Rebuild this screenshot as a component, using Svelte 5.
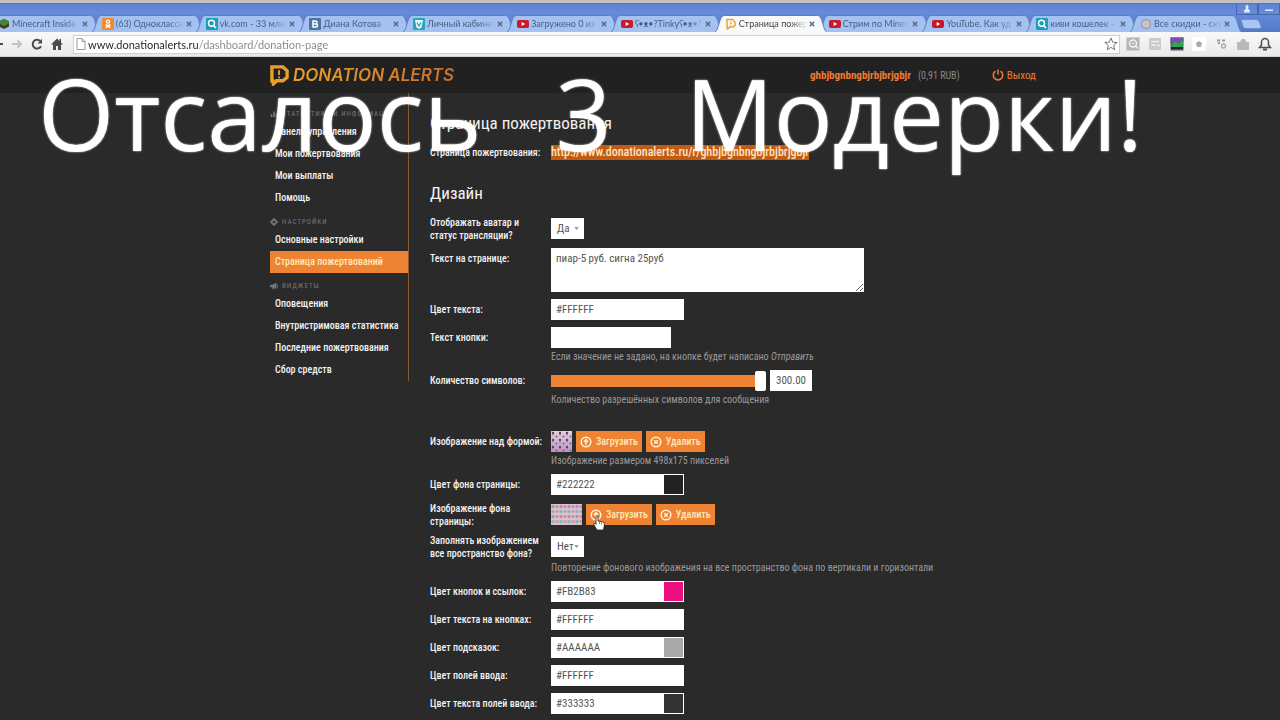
<script>
	const TABS = [
		{ icon: 'cube', title: 'Minecraft Inside' },
		{ icon: 'ok', title: '(63) Одноклассн' },
		{ icon: 'search', title: 'vk.com - 33 млн' },
		{ icon: 'vk', title: 'Диана Котова' },
		{ icon: 'shop', title: 'Личный кабинет' },
		{ icon: 'youtube', title: 'Загружено 0 из' },
		{ icon: 'youtube', title: 'ʕ•ᴥ•?Tinkyʕ•ᴥ•?' },
		{ icon: 'donation', title: 'Страница пожер', active: true },
		{ icon: 'youtube', title: 'Стрим по Minec' },
		{ icon: 'youtube', title: 'YouTube. Как уд' },
		{ icon: 'search', title: 'киви кошелек -' },
		{ icon: 'ring', title: 'Все скидки - ску' }
	];

	const MENU = [
		{
			icon: 'chart',
			title: 'Статистика и информация',
			items: ['Панель управления', 'Мои пожертвования', 'Мои выплаты', 'Помощь']
		},
		{
			icon: 'gear',
			title: 'Настройки',
			items: ['Основные настройки', 'Страница пожертвований']
		},
		{
			icon: 'horn',
			title: 'Виджеты',
			items: ['Оповещения', 'Внутристримовая статистика', 'Последние пожертвования', 'Сбор средств']
		}
	];

	const ACTIVE_ITEM = 'Страница пожертвований';

	let pageUrl = $state('www.donationalerts.ru/dashboard/donation-page');
	let showAvatar = $state('Да');
	let fillBackground = $state('Нет');
	let pageText = $state('пиар-5 руб. сигна 25руб');
	let buttonText = $state('');
	let symbols = $state(300);
	let textColor = $state('#FFFFFF');
	let backColor = $state('#222222');
	let colors = $state([
		{ id: 'links', label: 'Цвет кнопок и ссылок:', value: '#FB2B83', swatch: '#ec0f80' },
		{ id: 'button-text', label: 'Цвет текста на кнопках:', value: '#FFFFFF', swatch: '#ffffff' },
		{ id: 'hints', label: 'Цвет подсказок:', value: '#AAAAAA', swatch: '#aaa8ab' },
		{ id: 'inputs', label: 'Цвет полей ввода:', value: '#FFFFFF', swatch: '#ffffff' },
		{ id: 'input-text', label: 'Цвет текста полей ввода:', value: '#333333', swatch: '#333234' }
	]);
</script>

{#snippet favicon(name)}
	<svg class="favicon" viewBox="0 0 12 12" aria-hidden="true">
		{#if name === 'cube'}
			<path d="M1 3.500 6 1l5 2.500v5L6 11 1 8.500z" fill="#4b3524" />
			<path d="M1 3.500 6 1l5 2.500v2L6 8 1 5.500z" fill="#3d8a2b" />
		{:else if name === 'ok'}
			<rect width="12" height="12" rx="1" fill="#ee8a2f" />
			<circle cx="6" cy="3.600" r="1.600" fill="none" stroke="#fff" stroke-width="1.200" />
			<path d="M3.500 6.600q2.500 1.600 5 0M6 7.500 3.800 10M6 7.500 8.200 10" fill="none" stroke="#fff" stroke-width="1.300" />
		{:else if name === 'search'}
			<rect width="12" height="12" rx="1" fill="#1d9cb8" />
			<circle cx="5.500" cy="5.300" r="3" fill="none" stroke="#fff" stroke-width="1.400" />
			<path d="m7.500 7.500 2.500 2.500" stroke="#fff" stroke-width="1.600" />
		{:else if name === 'vk'}
			<rect width="12" height="12" rx="1" fill="#4c75a3" />
			<path d="M4 3h2.500a1.500 1.500 0 0 1 0 3H4zM4 6h3a1.500 1.500 0 0 1 0 3H4z" fill="none" stroke="#fff" stroke-width="1.500" />
		{:else if name === 'shop'}
			<rect width="12" height="12" rx="1" fill="#2ba3b8" />
			<path d="M2 2h8L8.500 9.500 6 11 3.500 9.500z" fill="#e9f8fb" />
			<path d="M4 4.500 6 8l2-3.500" fill="none" stroke="#2ba3b8" stroke-width="1.300" />
		{:else if name === 'youtube'}
			<rect y="2" width="12" height="8" rx="2" fill="#c9182b" />
			<path d="m4.700 4 3.500 2-3.500 2z" fill="#fff" />
		{:else if name === 'donation'}
			<path d="M2 1.500h5.500L10 4v3.500L8 9H4.500L2.500 11 2 9z" fill="none" stroke="#e6a532" stroke-width="1.500" />
			<path d="M5.800 3.500v2.500M5.800 6.800v1" stroke="#e6a532" stroke-width="1.200" />
		{:else}
			<circle cx="6" cy="6" r="4.500" fill="#c9c6d0" stroke="#9b9dae" stroke-width="1.500" />
			<path d="M4 8 8 4" stroke="#e8b899" stroke-width="1.300" />
		{/if}
	</svg>
{/snippet}

{#snippet uploadButtons()}
	<button type="button" class="btn">
		<svg viewBox="0 0 12 12" aria-hidden="true">
			<circle cx="6" cy="6" r="4.800" />
			<path d="M6 9V4M3.800 6 6 3.700 8.200 6" />
		</svg>
		Загрузить
	</button>
	<button type="button" class="btn">
		<svg viewBox="0 0 12 12" aria-hidden="true">
			<circle cx="6" cy="6" r="4.800" />
			<path d="m4.200 4.200 3.600 3.600M7.800 4.200 4.200 7.800" />
		</svg>
		Удалить
	</button>
{/snippet}

<div class="browser">
	<div class="titlebar">
		<button type="button" aria-label="Профиль">
			<svg viewBox="0 0 12 10"><path d="M4.500 2.500a1.500 1.500 0 1 1 3 0c0 1-.5 1.500-.5 2l2 2v2H3v-2l2-2c0-.5-.5-1-.5-2z" /></svg>
		</button>
		<button type="button" aria-label="Свернуть">
			<svg viewBox="0 0 12 10"><path d="M2 5.500h8v1.500H2z" /></svg>
		</button>
	</div>

	<div class="tabs">
		{#each TABS as tab}
			<div class="tab" class:active={tab.active}>
				<svg class="shape" viewBox="0 0 112 17" preserveAspectRatio="none" aria-hidden="true">
					<path d="M0 17C4 16 4 1 9 .500H103C108 1 108 16 112 17" />
				</svg>
				{@render favicon(tab.icon)}
				<span class="tab-title">{tab.title}</span>
				<button type="button" class="tab-close" aria-label="Закрыть">
					<svg viewBox="0 0 8 8"><path d="m1 1 6 6M7 1 1 7" /></svg>
				</button>
			</div>
		{/each}
		<button type="button" class="new-tab" aria-label="Новая вкладка">
			<svg viewBox="0 0 22 10"><path d="M1 .500h15q2 0 3 2l2 5q.5 2-1.500 2H6q-2 0-3-2z" /></svg>
		</button>
	</div>

	<div class="toolbar">
		<button type="button" class="tool back" aria-label="Назад">
			<svg viewBox="0 0 12 12"><path d="M1 6h9" stroke="#4a4a4a" fill="none" stroke-width="2" /></svg>
		</button>
		<button type="button" class="tool" aria-label="Вперёд">
			<svg viewBox="0 0 12 12"><path d="M1 6h9M6.500 2.500 10 6 6.500 9.500" stroke="#c4c4c4" fill="none" stroke-width="2" /></svg>
		</button>
		<button type="button" class="tool" aria-label="Обновить">
			<svg viewBox="0 0 12 12"><path d="M10 8.200A4.400 4.400 0 1 1 9.200 3" stroke="#4a4a4a" fill="none" stroke-width="2" /><path d="M11 .800V5.500H6.500z" fill="#4a4a4a" /></svg>
		</button>
		<button type="button" class="tool" aria-label="Домой">
			<svg viewBox="0 0 12 12"><path d="M6 .500 0 6.500h2V12h3V8h2v4h3V6.500h2L10 4.500V1H8.500v2z" fill="#4a4a4a" /></svg>
		</button>
		<div class="omnibox">
			<svg class="page-icon" viewBox="0 0 10 12" aria-hidden="true"><path d="M1 .500h5L9 3.500v8H1zM6 .500v3h3" /></svg>
			<input type="text" aria-label="Адрес" bind:value={pageUrl} />
			<button type="button" class="tool" aria-label="В закладки">
				<svg viewBox="0 0 14 14"><path d="m7 1 1.700 4.200 4.500.300-3.500 2.900 1.100 4.400L7 10.400l-3.800 2.400 1.100-4.400L.800 5.500l4.500-.3z" fill="#fff" stroke="#777" /></svg>
			</button>
		</div>
		<div class="extensions">
			<svg viewBox="0 0 14 14"><rect x=".5" y=".5" width="13" height="13" fill="#b4b4b4" /><circle cx="7" cy="6.500" r="3.500" fill="none" stroke="#f4f4f4" stroke-width="1.500" /><path d="m9.500 9 2.500 2.500" stroke="#f4f4f4" stroke-width="1.500" /><circle cx="7" cy="6.500" r="1" fill="#f4f4f4" /></svg>
			<svg viewBox="0 0 14 14"><rect x="1" y="1" width="12" height="12" rx="1" fill="#cacaca" /><path d="M3 4.500h8M3 8h5M9 8.500h3" stroke="#eee" stroke-width="1.500" /></svg>
			<svg viewBox="0 0 14 14"><rect x=".5" y=".5" width="13" height="13" fill="#55585d" /><path d="M.500.500h13V5L7 8 .500 6z" fill="#7a4fb0" /><path d="m1 9 4-5 3 3 5-4v7H1z" fill="#29a84f" /><path d="M1 11h12" stroke="#223" stroke-width="2" /></svg>
			<svg viewBox="0 0 14 14"><rect width="14" height="14" fill="#fff" /><path d="m7 4 3 2-1 4H5L4 6z" fill="#aaa" /></svg>
			<svg viewBox="0 0 14 14"><path d="M3 3.500h3M8 3.500h3M4 6h2" stroke="#9a9a9a" stroke-width="2" /><circle cx="9.500" cy="9" r="2" fill="none" stroke="#aaa" stroke-width="1.300" /></svg>
			<svg viewBox="0 0 14 14"><path d="M1 5h3l2-3h3l1 3h3v8H1z" fill="#b9b9b9" /></svg>
			<svg viewBox="0 0 14 14"><path d="M1.500 10.500 3.500 8V5a3.500 3.500 0 0 1 7 0v3l2 2.500z" fill="none" stroke="#4d4d4d" stroke-width="1.500" /><path d="M5 12.500h4" stroke="#4d4d4d" stroke-width="2" /></svg>
		</div>
	</div>
</div>

<div class="page">
	<header>
		<div class="container head">
			<a class="logo" href="/">
				<svg viewBox="0 0 20 22" aria-hidden="true">
					<path d="M2 2h11.500L18 6v7l-4.500 3.500H7L3.500 20l-.5-3.500H2z" fill="none" stroke="#e9a02b" stroke-width="3.500" />
					<path d="M9.500 5.500v5M9.500 12v2" stroke="#e9a02b" stroke-width="2" />
				</svg>
				<span>DONATION ALERTS</span>
			</a>
			<div class="user">
				<a class="user-name" href="#profile">ghbjbgnbngbjrbjbrjgbjr</a>
				<span class="balance">(0,91 RUB)</span>
				<a class="logout" href="#logout">
					<svg viewBox="0 0 12 12" aria-hidden="true"><path d="M3.500 2.200a4.700 4.700 0 1 0 5 0M6 .500v5" /></svg>
					Выход
				</a>
			</div>
		</div>
	</header>

	<div class="container body">
		<nav>
			{#each MENU as section}
				<h3>
					<svg viewBox="0 0 10 10" aria-hidden="true">
						{#if section.icon === 'chart'}
							<path d="M1 5h2v4H1zM4 2h2v7H4zM7 4h2v5H7z" />
						{:else if section.icon === 'gear'}
							<circle cx="5" cy="5" r="2.700" fill="none" stroke="#777" stroke-width="2" />
							<path d="M4.200 0h1.600v2H4.200zM4.200 8h1.600v2H4.200zM0 4.200h2v1.600H0zM8 4.200h2v1.600H8z" />
						{:else}
							<path d="M0 3.500h3L8 1v8L5 7v2H3V6.500H0zM9 3h1v4H9z" />
						{/if}
					</svg>
					{section.title}
				</h3>
				<ul>
					{#each section.items as item}
						<li><a href="#menu" class:active={item === ACTIVE_ITEM}>{item}</a></li>
					{/each}
				</ul>
			{/each}
		</nav>

		<main>
			<h1>Страница пожертвования</h1>
			<div class="row link-row">
				<span class="label">Страница пожертвования:</span>
				<div class="field">
					<a class="page-link" href="#page">http://www.donationalerts.ru/r/ghbjbgnbngbjrbjbrjgbjr</a>
				</div>
			</div>

			<h2>Дизайн</h2>

			<form>
				<div class="row double">
					<label for="avatar">Отображать аватар и статус трансляции?</label>
					<div class="field">
						<span class="select">
							<select id="avatar" bind:value={showAvatar}>
								<option>Да</option>
								<option>Нет</option>
							</select>
							<svg viewBox="0 0 6 4" aria-hidden="true"><path d="M0 0h6L3 4z" /></svg>
						</span>
					</div>
				</div>

				<div class="row">
					<label for="page-text">Текст на странице:</label>
					<div class="field">
						<textarea id="page-text" bind:value={pageText}></textarea>
					</div>
				</div>

				<div class="row">
					<label for="text-color">Цвет текста:</label>
					<div class="field">
						<span class="color">
							<input id="text-color" type="text" bind:value={textColor} />
							<span class="swatch" style="background: {textColor}"></span>
						</span>
					</div>
				</div>

				<div class="row">
					<label for="button-label">Текст кнопки:</label>
					<div class="field">
						<input id="button-label" class="short" type="text" bind:value={buttonText} />
					</div>
					<p class="hint">Если значение не задано, на кнопке будет написано <i>Отправить</i></p>
				</div>

				<div class="row">
					<label for="symbols">Количество символов:</label>
					<div class="field">
						<input id="symbols" type="range" min="0" max="300" bind:value={symbols} />
						<input class="amount" type="text" aria-label="Количество" value={symbols.toFixed(2)} />
					</div>
					<p class="hint">Количество разрешённых символов для сообщения</p>
				</div>

				<div class="row spaced">
					<span class="label">Изображение над формой:</span>
					<div class="field">
						<svg class="thumb" viewBox="0 0 21 21" aria-hidden="true">
							<defs>
								<linearGradient id="lilac" x1="0" y1="0" x2="0" y2="1">
									<stop offset="0" stop-color="#e2d3de" />
									<stop offset="1" stop-color="#b995c5" />
								</linearGradient>
								<pattern id="cakes" width="7" height="7" patternUnits="userSpaceOnUse">
									<circle cx="2" cy="2" r="1.200" fill="#65405f" />
									<path d="M1 3h2v1.500H1z" fill="#c878ab" />
									<circle cx="5.500" cy="5.500" r="1" fill="#76618e" />
								</pattern>
							</defs>
							<rect width="21" height="21" fill="url(#lilac)" />
							<rect width="21" height="21" fill="url(#cakes)" />
						</svg>
						{@render uploadButtons()}
					</div>
					<p class="hint">Изображение размером 498x175 пикселей</p>
				</div>

				<div class="row">
					<label for="back-color">Цвет фона страницы:</label>
					<div class="field">
						<span class="color">
							<input id="back-color" type="text" bind:value={backColor} />
							<span class="swatch" style="background: {backColor}"></span>
						</span>
					</div>
				</div>

				<div class="row double">
					<span class="label">Изображение фона страницы:</span>
					<div class="field">
						<svg class="thumb wide" viewBox="0 0 31 21" aria-hidden="true">
							<defs>
								<pattern id="dots" width="8" height="10" patternUnits="userSpaceOnUse">
									<rect width="8" height="10" fill="#d9c3d0" />
									<circle cx="2" cy="2.500" r="1.700" fill="#dd7ba3" />
									<circle cx="6" cy="2.500" r="1.500" fill="#a79bb0" />
									<circle cx="2" cy="7.500" r="1.700" fill="#7dbcbf" />
									<circle cx="6" cy="7.500" r="1.500" fill="#dc9299" />
								</pattern>
							</defs>
							<rect width="31" height="21" fill="url(#dots)" />
						</svg>
						{@render uploadButtons()}
						<svg class="cursor" viewBox="0 0 12 16" aria-hidden="true">
							<path d="M3 1.500q1-1.500 2 0V6l5 1q1.500.5 1.500 2L10.500 15H4L.700 9.500q0-1.500 1.300-1L3 9.500z" fill="#fff" stroke="#222" stroke-width=".8" />
							<path d="M6.500 7v2M8.500 7.500v2" stroke="#555" stroke-width=".7" />
						</svg>
					</div>
				</div>

				<div class="row double">
					<label for="fill">Заполнять изображением все пространство фона?</label>
					<div class="field">
						<span class="select">
							<select id="fill" bind:value={fillBackground}>
								<option>Нет</option>
								<option>Да</option>
							</select>
							<svg viewBox="0 0 6 4" aria-hidden="true"><path d="M0 0h6L3 4z" /></svg>
						</span>
					</div>
					<p class="hint">Повторение фонового изображения на все пространство фона по вертикали и горизонтали</p>
				</div>

				{#each colors as color}
					<div class="row">
						<label for={color.id}>{color.label}</label>
						<div class="field">
							<span class="color">
								<input id={color.id} type="text" bind:value={color.value} />
								<span class="swatch" style="background: {color.swatch}"></span>
							</span>
						</div>
					</div>
				{/each}
			</form>
		</main>
	</div>
</div>

<div class="caption">
	<span>Отсалось</span>
	<span>3</span>
	<span>Модерки!</span>
</div>

<style>
	:global(body) {
		background: #2b2a2b;
		overflow-x: hidden;
	}

	:global(#app) {
		position: relative;
		font-family: 'Roboto Condensed', 'Liberation Sans Narrow', Roboto, sans-serif;
		font-size: 11px;
	}

	button,
	input,
	select,
	textarea {
		box-sizing: border-box;
		margin: 0;
		padding: 0;
		border: 0;
		border-radius: 0;
		font: inherit;
	}

	button {
		background: none;
	}

	svg {
		display: block;
		flex: none;
	}

	/* browser window */
	.browser {
		border-top: 3px solid #c5c0c3;
		background: linear-gradient(#5a84d4, #668bd8 10px, #5379c6 29px);
		font-family: Lato, 'Open Sans', sans-serif;
		overflow: hidden;
	}

	.titlebar {
		display: flex;
		justify-content: flex-end;
		height: 12px;
		border-top: 1px solid #5977b3;
		box-sizing: border-box;
	}

	.titlebar button {
		width: 22px;
		border: 1px solid #4566ad;
		border-top: 0;
	}

	.titlebar svg {
		width: 12px;
		height: 10px;
		margin: 0 auto;
		fill: #dfe9fb;
	}

	.tabs {
		display: flex;
		height: 17px;
		margin-left: -8px;
		padding-right: 18px;
	}

	.tab {
		position: relative;
		display: flex;
		align-items: center;
		flex: 1 1 0;
		min-width: 0;
		box-sizing: border-box;
		padding: 0 8px 0 6px;
		color: #4a5d80;
	}

	.tab.active {
		z-index: 1;
		color: #444;
	}

	.shape {
		position: absolute;
		left: -4px;
		top: 0;
		width: calc(100% + 8px);
		height: 17px;
		fill: #a3c1f1;
		stroke: #5f7fbd;
	}

	.active .shape {
		fill: #f8f9fb;
	}

	.favicon {
		position: relative;
		width: 12px;
		height: 12px;
	}

	.tab-title {
		position: relative;
		flex: 1;
		min-width: 0;
		margin: 0 1px 0 2px;
		font-size: 9px;
		line-height: 16px;
		white-space: nowrap;
		overflow: hidden;
		mask-image: linear-gradient(to right, #000 75%, transparent);
	}

	.tab-close {
		position: relative;
	}

	.tab-close svg {
		width: 6px;
		height: 6px;
		fill: none;
		stroke: #5b6a88;
		stroke-width: 2;
	}

	.new-tab svg {
		width: 22px;
		height: 10px;
		margin-left: 2px;
		fill: #a9c5f3;
		stroke: #6f8fc9;
	}

	.toolbar {
		display: flex;
		align-items: center;
		height: 25px;
		box-sizing: border-box;
		border-bottom: 1px solid #d0d0d0;
		background: linear-gradient(#f8f9fb, #e9e9e9);
	}

	.tool svg {
		width: 12px;
		height: 12px;
		margin: 0 4px;
	}

	.tool.back svg {
		margin: 0 2px 0 -7px;
	}

	.omnibox {
		display: flex;
		align-items: center;
		flex: 1;
		height: 19px;
		box-sizing: border-box;
		margin-left: 6px;
		border: 1px solid #cfcfcf;
		background: #fff;
	}

	.page-icon {
		width: 10px;
		height: 12px;
		margin: 0 2px;
		fill: #fff;
		stroke: #999;
	}

	.omnibox input {
		flex: 1;
		height: 17px;
		font-size: 11px;
		outline: 0;
		background: linear-gradient(to right, #222 111px, #888 111px) text;
	}

	.omnibox .tool svg {
		width: 14px;
		height: 14px;
		margin: 0 1px;
	}

	.extensions {
		display: flex;
		gap: 8px;
		padding: 0 8px 0 6px;
	}

	.extensions svg {
		width: 14px;
		height: 14px;
	}

	/* site */
	.page {
		min-height: calc(100vh - 57px);
		background: #2b2a2b;
		color: #f2f2f2;
	}

	a {
		color: inherit;
		text-decoration: none;
	}

	.container {
		max-width: 740px;
		margin: 0 auto;
	}

	header {
		background: #222122;
	}

	.head {
		display: flex;
		justify-content: space-between;
		align-items: center;
		height: 36px;
	}

	.logo {
		display: flex;
		align-items: center;
		gap: 4px;
		font-family: Inter, sans-serif;
		font-size: 17px;
		font-style: italic;
		font-weight: 600;
	}

	.logo svg {
		width: 19px;
		height: 21px;
	}

	.logo span {
		color: transparent;
		background: linear-gradient(to right, #e9a02b, #cb6f2c) text;
	}

	.user {
		display: flex;
		align-items: center;
		margin-right: -26px;
		color: #ef7b33;
		white-space: nowrap;
	}

	.user-name {
		font-weight: 700;
	}

	.balance {
		margin: 0 32px 0 7px;
		font-size: 10px;
		color: #888;
	}

	.logout {
		display: flex;
		align-items: center;
		gap: 3px;
	}

	.logout svg {
		width: 12px;
		height: 12px;
		fill: none;
		stroke: #ef7b33;
		stroke-width: 1.500;
	}

	.body {
		display: grid;
		grid-template-columns: 139px minmax(0, 1fr);
		column-gap: 21px;
		align-items: start;
	}

	nav {
		padding-top: 8px;
		border-right: 1px solid #8a5a33;
		font-size: 10px;
		font-weight: 500;
	}

	nav h3 {
		display: flex;
		align-items: center;
		gap: 4px;
		height: 20px;
		box-sizing: border-box;
		margin: 0;
		padding-top: 5px;
		font-size: 7px;
		font-weight: 400;
		letter-spacing: 1px;
		text-transform: uppercase;
		white-space: nowrap;
		color: #777;
	}

	nav h3 svg {
		width: 8px;
		height: 8px;
		fill: #777;
	}

	ul {
		margin: 0;
		padding: 0;
		list-style: none;
	}

	nav a {
		display: block;
		padding-left: 5px;
		line-height: 22px;
		white-space: nowrap;
	}

	nav a.active {
		background: #ee8433;
		color: #ffe9b8;
	}

	main {
		padding-top: 19px;
	}

	h1,
	h2 {
		margin: 0;
		font-size: 17px;
		line-height: 22px;
		font-weight: 400;
	}

	h2 {
		margin: 19px 0 12px;
	}

	form {
		display: grid;
		gap: 7px;
	}

	.row {
		display: grid;
		grid-template-columns: 116px minmax(0, 1fr);
		column-gap: 5px;
	}

	.link-row {
		margin-top: 8px;
	}

	.spaced {
		margin-top: 18px;
	}

	label,
	.label {
		font-size: 10px;
		font-weight: 500;
		line-height: 21px;
		white-space: nowrap;
	}

	.double label,
	.double .label {
		height: 25px;
		line-height: 13px;
		white-space: normal;
	}

	.field {
		position: relative;
		display: flex;
		align-items: center;
		gap: 4px;
		min-height: 21px;
	}

	.page-link {
		font-size: 12px;
		font-weight: 500;
		line-height: 15px;
		background: #c25c12;
		color: #ffe3c4;
	}

	.hint {
		grid-column: 2;
		margin: 0;
		padding-top: 2px;
		font-size: 10px;
		line-height: 13px;
		color: #999;
		white-space: nowrap;
	}

	.select {
		display: grid;
		align-items: center;
	}

	select {
		grid-area: 1 / 1;
		width: 33px;
		height: 21px;
		padding-left: 6px;
		appearance: none;
		background: #fff;
		color: #555;
	}

	.select svg {
		grid-area: 1 / 1;
		justify-self: end;
		width: 5px;
		height: 3px;
		margin-right: 5px;
		fill: #999;
		pointer-events: none;
	}

	textarea {
		display: block;
		width: 313px;
		height: 44px;
		padding: 4px 5px;
		background: #fff;
		color: #555;
	}

	input[type='text'] {
		color: #555;
	}

	.omnibox input[type='text'] {
		color: transparent;
	}

	.color {
		display: flex;
		width: 133px;
		height: 21px;
		box-sizing: border-box;
		padding: 1px;
		background: #fff;
	}

	.color input {
		flex: 1;
		min-width: 0;
		padding-left: 4px;
	}

	.swatch {
		width: 19px;
	}

	.short {
		width: 120px;
		height: 21px;
		padding: 0 5px;
		background: #fff;
	}

	input[type='range'] {
		width: 215px;
		height: 21px;
		appearance: none;
		background: linear-gradient(#ee8433, #ee8433) 0 5px / 100% 12px no-repeat;
		border-radius: 2px;
	}

	input[type='range']::-webkit-slider-thumb {
		appearance: none;
		width: 11px;
		height: 20px;
		border-radius: 2px;
		background: #fff;
	}

	.amount {
		width: 42px;
		height: 21px;
		background: #fff;
		text-align: center;
	}

	.thumb {
		width: 21px;
		height: 21px;
	}

	.thumb.wide {
		width: 31px;
	}

	.btn {
		display: flex;
		align-items: center;
		gap: 4px;
		height: 21px;
		padding: 0 4px;
		background: #ee8433;
		color: #ffe9b8;
		font-size: 10px;
		font-weight: 500;
	}

	.btn svg {
		width: 12px;
		height: 12px;
		fill: none;
		stroke: #fff0cf;
		stroke-width: 1.500;
	}

	.cursor {
		position: absolute;
		left: 42px;
		top: 13px;
		width: 12px;
		height: 16px;
	}

	/* video caption lying over the page */
	.caption {
		position: absolute;
		left: 38px;
		top: 53px;
		display: flex;
		gap: 74px;
		font-family: 'Open Sans', 'Noto Sans', sans-serif;
		font-size: 98px;
		line-height: 120px;
		color: #fff;
		white-space: nowrap;
		text-shadow: 0 0 2px #fff;
		pointer-events: none;
	}
</style>
